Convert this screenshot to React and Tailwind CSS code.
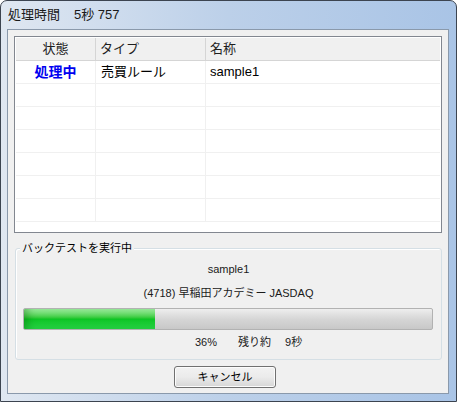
const font = "font-['Liberation_Sans','Noto_Sans_CJK_JP',sans-serif]";

const rows = [
  { state: "処理中", type: "売買ルール", name: "sample1" },
  {}, {}, {}, {}, {}, {},
];

function ListView() {
  return (
    <div className="h-[197px] border border-[#828790] bg-white p-px overflow-hidden">
      {/* header */}
      <div className="flex h-[23px] border-b border-[#d5d5d5] bg-[#f0f0f0] text-[13px] leading-[22px] text-[#1e1e1e]">
        <div className="w-[80px] border-r border-[#d5d5d5] text-center">状態</div>
        <div className="w-[110px] border-r border-[#d5d5d5] pl-[4px]">タイプ</div>
        <div className="flex-1 pl-[4px]">名称</div>
      </div>
      {rows.map((r, i) => (
        <div key={i} className="flex h-[23px] border-b border-[#f0f0f0] text-[13px] leading-[22px]">
          <div className="w-[80px] border-r border-[#f0f0f0] text-center text-[14px] font-bold text-[#0000f0]">{r.state}</div>
          <div className="w-[110px] border-r border-[#f0f0f0] pl-[5px] text-black">{r.type}</div>
          <div className="flex-1 pl-[4px] text-black">{r.name}</div>
        </div>
      ))}
    </div>
  );
}

function ProgressBar({ value }) {
  return (
    <div className="relative ml-[7px] h-[22px] w-[410px] overflow-hidden rounded-[2px] border border-[#b2b2b2] bg-gradient-to-b from-[#eeeeee] via-[#d6d6d6] to-[#c8c8c8]">
      <div
        className="h-full bg-gradient-to-b from-[#9ef0a0] via-[#0cc424] to-[#26d444] shadow-[inset_8px_0_8px_-4px_rgba(0,90,0,0.35)]"
        style={{ width: `${value}%` }}
      />
    </div>
  );
}

export default function App() {
  return (
    <div className={`${font} h-[402px] w-[457px] overflow-hidden rounded-t-[7px] border border-[#3c4450] bg-gradient-to-r from-[#dfe7f1] via-[#bcd0e9] to-[#a9c4e6] pl-[6px] pr-[7px] pb-[7px]`}>
      {/* title bar */}
      <div className="flex h-[28px] items-center pl-[1px] text-[13px] text-[#1a1a1a]">
        <span>処理時間</span>
        <span className="ml-[14px]">5秒 757</span>
      </div>

      {/* client */}
      <div className="flex h-[365px] flex-col border border-[#8a99ab] bg-[#f0f0f0] px-[6px] pt-[6px]">
        <ListView />

        {/* group box */}
        <div className="relative ml-px mt-[15px] h-[112px] rounded-[3px] border border-[#d5dfe5] shadow-[inset_1px_1px_0_#fff]">
          <div className="absolute -top-[9px] left-[4px] bg-[#f0f0f0] px-[2px] text-[11px] leading-[16px] text-black">
            バックテストを実行中
          </div>
          <div className="flex flex-col text-[11px] text-[#1a1a1a]">
            <div className="mt-[12px] h-[16px] text-center leading-[16px]">sample1</div>
            <div className="mt-[8px] h-[16px] text-center leading-[16px]">(4718) 早稲田アカデミー JASDAQ</div>
            <div className="mt-[7px]">
              <ProgressBar value={32} />
            </div>
            <div className="mt-[4px] flex h-[16px] items-center leading-[16px]">
              <span className="ml-[179px]">36%</span>
              <span className="ml-[21px]">残り約</span>
              <span className="ml-[14px]">9秒</span>
            </div>
          </div>
        </div>

        <div className="mt-[6px] flex">
          <button className="ml-[160px] h-[22px] w-[102px] rounded-[3px] border border-[#707070] bg-gradient-to-b from-[#f2f2f2] via-[#ebebeb] to-[#d6d6d6] text-[11px] leading-[20px] text-black shadow-[inset_0_0_0_1px_#fcfcfc]">
            キャンセル
          </button>
        </div>
      </div>
    </div>
  );
}
